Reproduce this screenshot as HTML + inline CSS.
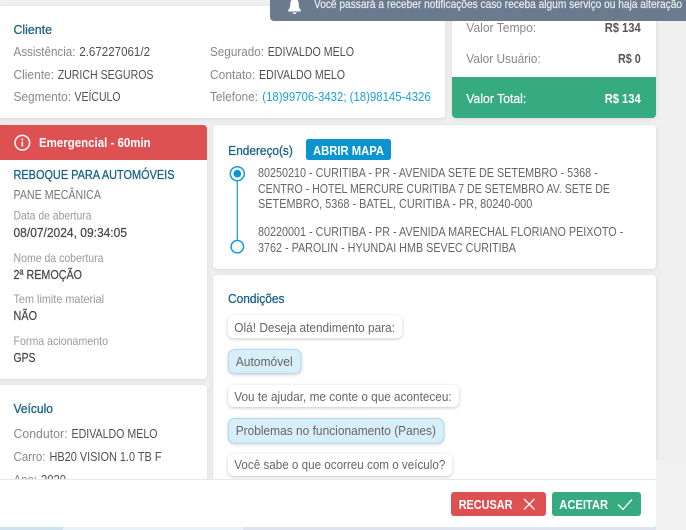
<!DOCTYPE html>
<html lang="pt-BR"><head><meta charset="utf-8"><title>Atendimento</title>
<style>
html,body{margin:0;padding:0;background:#f0f0f0;width:686px;height:530px;overflow:hidden}
svg{display:block}
text{font-family:"Liberation Sans",sans-serif;font-size:13px;fill:#5a5a5a;white-space:pre}
.l{fill:#888}
.v{fill:#505050}
.h{fill:#1c6288;stroke:#1c6288;stroke-width:.3px}
.s{font-size:12px;fill:#999}
.d{fill:#444;stroke:#444;stroke-width:.2px}
.b{font-weight:700}
.w{fill:#fff}
.card{fill:#fff;filter:drop-shadow(0 1px 2px rgba(0,0,0,.1))}
.bub{fill:#fff;filter:drop-shadow(0 1px 1.5px rgba(0,0,0,.22))}
.sel{fill:#d8eef8;stroke:#aadcf1;stroke-width:1;filter:drop-shadow(0 1px 1.5px rgba(0,0,0,.18))}
.a{fill:#666}
</style></head><body>
<svg width="686" height="530" viewBox="0 0 686 530" xmlns="http://www.w3.org/2000/svg">
<rect width="686" height="530" fill="#f0f0f0"/>

<!-- Cliente -->
<rect class="card" x="-4" y="6" width="449" height="112" rx="4"/>
<text class="h" x="13.500" y="34" textLength="38.500" lengthAdjust="spacingAndGlyphs">Cliente</text>
<text class="l" x="13.500" y="56" textLength="62" lengthAdjust="spacingAndGlyphs">Assistência:</text>
<text class="v" x="79.300" y="56" textLength="70.700" lengthAdjust="spacingAndGlyphs">2.67227061/2</text>
<text class="l" x="13.500" y="79" textLength="40.500" lengthAdjust="spacingAndGlyphs">Cliente:</text>
<text class="v" x="57.700" y="79" textLength="95.800" lengthAdjust="spacingAndGlyphs">ZURICH SEGUROS</text>
<text class="l" x="13.500" y="101" textLength="57.500" lengthAdjust="spacingAndGlyphs">Segmento:</text>
<text class="v" x="74.500" y="101" textLength="46" lengthAdjust="spacingAndGlyphs">VEÍCULO</text>
<text class="l" x="210" y="56" textLength="54" lengthAdjust="spacingAndGlyphs">Segurado:</text>
<text class="v" x="267.700" y="56" textLength="86.300" lengthAdjust="spacingAndGlyphs">EDIVALDO MELO</text>
<text class="l" x="210" y="79" textLength="45.300" lengthAdjust="spacingAndGlyphs">Contato:</text>
<text class="v" x="259" y="79" textLength="86" lengthAdjust="spacingAndGlyphs">EDIVALDO MELO</text>
<text class="l" x="210" y="101" textLength="48" lengthAdjust="spacingAndGlyphs">Telefone:</text>
<text x="262.300" y="101" textLength="168.400" lengthAdjust="spacingAndGlyphs" style="fill:#1d9fdf">(18)99706-3432; (18)98145-4326</text>

<!-- Valores -->
<rect class="card" x="452" y="-4" width="204" height="122" rx="4"/>
<text class="l" x="466.300" y="32" textLength="70" lengthAdjust="spacingAndGlyphs">Valor Tempo:</text>
<text class="b" x="604.700" y="32" textLength="36" lengthAdjust="spacingAndGlyphs" style="fill:#555">R$ 134</text>
<text class="l" x="466.300" y="63" textLength="74.400" lengthAdjust="spacingAndGlyphs">Valor Usuário:</text>
<text class="b" x="618" y="63" textLength="22.700" lengthAdjust="spacingAndGlyphs" style="fill:#555">R$ 0</text>
<path d="M452 77H656V114a4 4 0 0 1-4 4H456a4 4 0 0 1-4-4Z" fill="#36aa80"/>
<text class="w" x="466.300" y="103" textLength="60" lengthAdjust="spacingAndGlyphs" style="fill:#fff;stroke:#fff;stroke-width:.25px">Valor Total:</text>
<text class="b" x="604.700" y="103" textLength="36" lengthAdjust="spacingAndGlyphs" style="fill:#fff">R$ 134</text>

<!-- Notificacao -->
<path d="M270 0H686V21H274a4 4 0 0 1-4-4Z" fill="#6b7a8e"/>
<path d="M294.500 -1c-3 0-4.200 2-4.200 4.500 0 3.500-.8 5-2 6.500v1.500h12.400V10c-1.200-1.500-2-3-2-6.500 0-2.500-1.200-4.500-4.200-4.500Z" fill="#fff"/>
<path d="M292.500 12.500h4a2 1.500 0 0 1-4 0Z" fill="#fff"/>
<text x="314" y="8" textLength="368" lengthAdjust="spacingAndGlyphs" style="fill:#e8ebef;font-size:12px;stroke:#e8ebef;stroke-width:.25px">Você passará a receber notificações caso receba algum serviço ou haja alteração</text>

<!-- Emergencial -->
<rect class="card" x="-4" y="125" width="211" height="254" rx="4"/>
<path d="M-4 125H203a4 4 0 0 1 4 4V160H-4Z" fill="#dd5152"/>
<circle cx="22.300" cy="142.700" r="7.300" fill="none" stroke="#fff" stroke-width="1.500"/>
<rect x="21.500" y="141.500" width="1.600" height="5" fill="#fff"/>
<rect x="21.500" y="138.600" width="1.600" height="1.700" fill="#fff"/>
<text class="b w" x="39" y="147" textLength="111.700" lengthAdjust="spacingAndGlyphs" style="fill:#fff">Emergencial - 60min</text>
<text class="h" x="13.500" y="179" textLength="161" lengthAdjust="spacingAndGlyphs">REBOQUE PARA AUTOMÓVEIS</text>
<text class="l" x="13.500" y="199" textLength="87.500" lengthAdjust="spacingAndGlyphs" style="fill:#777">PANE MECÂNICA</text>
<text class="s" x="13.500" y="219.500" textLength="78" lengthAdjust="spacingAndGlyphs">Data de abertura</text>
<text class="d" x="13.500" y="237" textLength="113.500" lengthAdjust="spacingAndGlyphs">08/07/2024, 09:34:05</text>
<text class="s" x="13.500" y="262" textLength="90" lengthAdjust="spacingAndGlyphs">Nome da cobertura</text>
<text class="d" x="13.500" y="279" textLength="68.500" lengthAdjust="spacingAndGlyphs">2ª REMOÇÃO</text>
<text class="s" x="13.500" y="303" textLength="90.500" lengthAdjust="spacingAndGlyphs">Tem limite material</text>
<text class="d" x="13.500" y="320" textLength="23.500" lengthAdjust="spacingAndGlyphs">NÃO</text>
<text class="s" x="13.500" y="345" textLength="94.500" lengthAdjust="spacingAndGlyphs">Forma acionamento</text>
<text class="d" x="13.500" y="362" textLength="22" lengthAdjust="spacingAndGlyphs">GPS</text>

<!-- Veiculo -->
<rect class="card" x="-4" y="385" width="211" height="130" rx="4"/>
<text class="h" x="13.500" y="413" textLength="39.500" lengthAdjust="spacingAndGlyphs">Veículo</text>
<text class="l" x="13.500" y="438" textLength="54" lengthAdjust="spacingAndGlyphs">Condutor:</text>
<text class="v" x="71.500" y="438" textLength="86" lengthAdjust="spacingAndGlyphs">EDIVALDO MELO</text>
<text class="l" x="13.500" y="461" textLength="32" lengthAdjust="spacingAndGlyphs">Carro:</text>
<text class="v" x="49.500" y="461" textLength="112" lengthAdjust="spacingAndGlyphs">HB20 VISION 1.0 TB F</text>
<text class="l" x="13.500" y="484" textLength="23.500" lengthAdjust="spacingAndGlyphs">Ano:</text>
<text class="v" x="41" y="484" textLength="25" lengthAdjust="spacingAndGlyphs">2020</text>

<!-- Enderecos -->
<rect class="card" x="213" y="125" width="443" height="144" rx="4"/>
<text class="h" x="228.300" y="155" textLength="64.500" lengthAdjust="spacingAndGlyphs">Endereço(s)</text>
<rect x="306" y="139" width="85" height="21" rx="2.500" fill="#0b94d0"/>
<text class="b" x="313" y="155" textLength="71" lengthAdjust="spacingAndGlyphs" style="fill:#fff">ABRIR MAPA</text>
<line x1="237.300" y1="180" x2="237.300" y2="241" stroke="#159bd8" stroke-width="1.200"/>
<circle cx="237.300" cy="173.700" r="7" fill="#fff" stroke="#159bd8" stroke-width="1.500"/>
<circle cx="237.300" cy="173.700" r="3.800" fill="#0b94d0"/>
<circle cx="237.300" cy="246.700" r="6.200" fill="#fff" stroke="#159bd8" stroke-width="1.500"/>
<text class="a" x="258" y="177" textLength="339.700" lengthAdjust="spacingAndGlyphs">80250210 - CURITIBA - PR - AVENIDA SETE DE SETEMBRO - 5368 -</text>
<text class="a" x="258" y="193" textLength="352" lengthAdjust="spacingAndGlyphs">CENTRO - HOTEL MERCURE CURITIBA 7 DE SETEMBRO AV. SETE DE</text>
<text class="a" x="258" y="208" textLength="274.300" lengthAdjust="spacingAndGlyphs">SETEMBRO, 5368 - BATEL, CURITIBA - PR, 80240-000</text>
<text class="a" x="258" y="236" textLength="365.300" lengthAdjust="spacingAndGlyphs">80220001 - CURITIBA - PR - AVENIDA MARECHAL FLORIANO PEIXOTO -</text>
<text class="a" x="258" y="252" textLength="258" lengthAdjust="spacingAndGlyphs">3762 - PAROLIN - HYUNDAI HMB SEVEC CURITIBA</text>

<!-- Condicoes -->
<rect class="card" x="213" y="275" width="443" height="240" rx="4"/>
<text class="h" x="228" y="303" textLength="56.500" lengthAdjust="spacingAndGlyphs">Condições</text>
<rect class="bub" x="228" y="315" width="174.300" height="23.300" rx="6"/>
<text class="a" x="234.300" y="332" textLength="160.700" lengthAdjust="spacingAndGlyphs">Olá! Deseja atendimento para:</text>
<rect class="sel" x="228.500" y="349.500" width="72.500" height="24" rx="6"/>
<text class="a" x="235.700" y="366" textLength="57" lengthAdjust="spacingAndGlyphs">Automóvel</text>
<rect class="bub" x="228" y="385" width="231" height="22" rx="6"/>
<text class="a" x="234.300" y="401" textLength="217.400" lengthAdjust="spacingAndGlyphs">Vou te ajudar, me conte o que aconteceu:</text>
<rect class="sel" x="228.500" y="418.500" width="215.200" height="24.500" rx="6"/>
<text class="a" x="235.700" y="435" textLength="200.300" lengthAdjust="spacingAndGlyphs">Problemas no funcionamento (Panes)</text>
<rect class="bub" x="228" y="453.700" width="224.300" height="22.300" rx="6"/>
<text class="a" x="234.300" y="469" textLength="211" lengthAdjust="spacingAndGlyphs">Você sabe o que ocorreu com o veículo?</text>

<!-- Rodape -->
<rect x="0" y="527" width="686" height="3" fill="#dde4f0"/>
<rect x="0" y="527" width="63" height="3" fill="#cfe3ee"/>
<rect x="63" y="527" width="180" height="3" fill="#e8f2f8"/>
<rect x="656" y="460" width="30" height="70" fill="#f1f1f1"/>
<path d="M0 480H656V523a4 4 0 0 1-4 4H0Z" fill="#fff"/>
<line x1="0" y1="479.500" x2="656" y2="479.500" stroke="#e8e8e8"/>
<rect x="451" y="492" width="95" height="24" rx="3" fill="#dd5152"/>
<text class="b" x="458.700" y="509" textLength="53.800" lengthAdjust="spacingAndGlyphs" style="fill:#fff">RECUSAR</text>
<path d="M524 499L534.500 509.500M534.500 499L524 509.500" stroke="#fff" stroke-width="1.300" fill="none"/>
<rect x="552" y="492" width="89" height="24" rx="3" fill="#36aa80"/>
<text class="b" x="559.300" y="509" textLength="48.700" lengthAdjust="spacingAndGlyphs" style="fill:#fff">ACEITAR</text>
<path d="M618 504.500L623 509.300L632 499.500" stroke="#fff" stroke-width="1.300" fill="none"/>
</svg>
</body></html>
